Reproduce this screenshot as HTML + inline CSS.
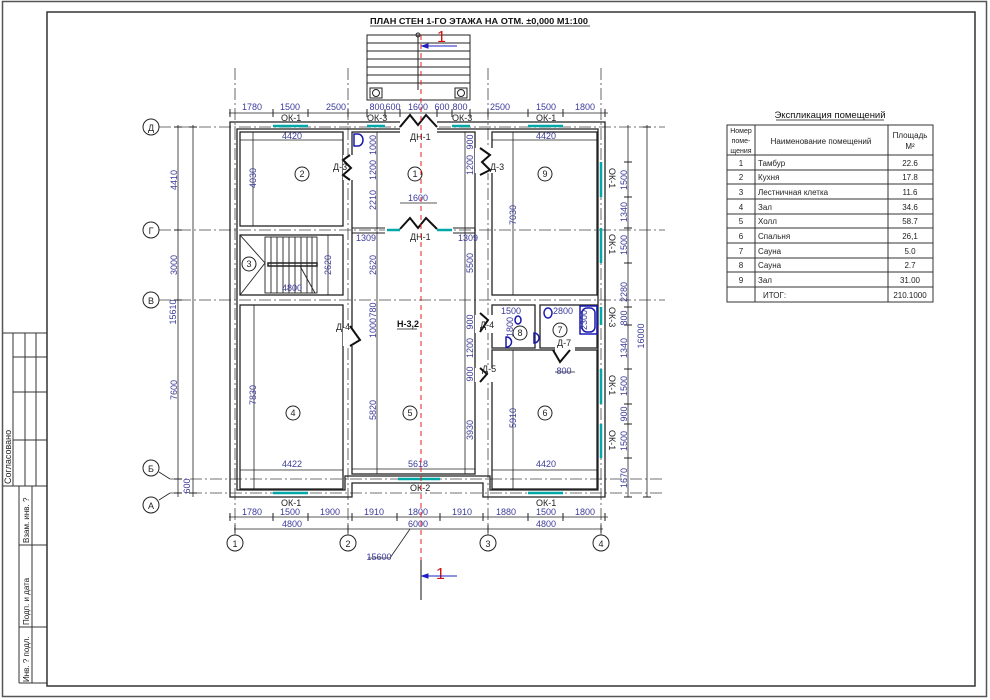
<!DOCTYPE html>
<html><head><meta charset="utf-8"><style>
html,body{margin:0;padding:0;background:#fff;}
svg{display:block;}
text{font-family:"Liberation Sans",sans-serif;}
.d{fill:#3b3b9a;font-size:9px;}
.k{fill:#222;font-size:9px;}
.t{fill:#222;font-size:8px;}
</style></head><body>
<svg width="990" height="700" viewBox="0 0 990 700" xmlns="http://www.w3.org/2000/svg">
<!-- frames -->
<rect x="2.5" y="1.5" width="984" height="695" fill="none" stroke="#555" stroke-width="1.5"/>
<rect x="47" y="12" width="928" height="674" fill="none" stroke="#333" stroke-width="1.5"/>
<!-- left stamp -->
<g stroke="#333" stroke-width="1" fill="none">
<line x1="3" y1="333" x2="47" y2="333"/>
<line x1="13" y1="333" x2="13" y2="486"/>
<line x1="25" y1="333" x2="25" y2="486"/>
<line x1="36" y1="333" x2="36" y2="486"/>
<line x1="13" y1="357" x2="47" y2="357"/>
<line x1="13" y1="392" x2="47" y2="392"/>
<line x1="13" y1="440" x2="47" y2="440"/>
<line x1="3" y1="486" x2="47" y2="486"/>
<line x1="19" y1="486" x2="19" y2="683"/>
<line x1="32" y1="486" x2="32" y2="683"/>
<line x1="19" y1="545" x2="47" y2="545"/>
<line x1="19" y1="627" x2="47" y2="627"/>
<line x1="19" y1="683" x2="47" y2="683"/>
</g>
<text class="k" transform="translate(11,484) rotate(-90)" font-size="10">Согласовано</text>
<text class="t" transform="translate(29,682) rotate(-90)">Инв. ? подл.</text>
<text class="t" transform="translate(29,625) rotate(-90)">Подп. и дата</text>
<text class="t" transform="translate(29,543) rotate(-90)">Взам. инв. ?</text>

<!-- title -->
<text x="370" y="24" font-size="8.5" font-weight="bold" fill="#111" textLength="218" lengthAdjust="spacingAndGlyphs">ПЛАН СТЕН 1-ГО ЭТАЖА НА ОТМ. ±0,000  М1:100</text>
<line x1="370" y1="26" x2="590" y2="26" stroke="#111" stroke-width="0.8"/>

<!-- axes -->
<g stroke="#444" stroke-width="0.8" stroke-dasharray="12,3,2,3" fill="none">
<line x1="159" y1="127" x2="665" y2="127"/>
<line x1="159" y1="230" x2="665" y2="230"/>
<line x1="159" y1="300" x2="665" y2="300"/>
<line x1="170" y1="479" x2="665" y2="479"/>
<line x1="170" y1="493" x2="665" y2="493"/>
<line x1="235" y1="68" x2="235" y2="535"/>
<line x1="348" y1="68" x2="348" y2="535"/>
<line x1="488" y1="68" x2="488" y2="535"/>
<line x1="601" y1="68" x2="601" y2="535"/>
</g>
<g stroke="#222" stroke-width="1" fill="#fff">
<circle cx="151" cy="127" r="8"/><circle cx="151" cy="230" r="8"/><circle cx="151" cy="300" r="8"/>
<circle cx="151" cy="468" r="8"/><circle cx="151" cy="505" r="8"/>
<circle cx="235" cy="543" r="8"/><circle cx="348" cy="543" r="8"/><circle cx="488" cy="543" r="8"/><circle cx="601" cy="543" r="8"/>
</g>
<g stroke="#222" stroke-width="0.8"><line x1="159" y1="472" x2="170" y2="479"/><line x1="159" y1="500" x2="170" y2="493"/></g>
<g class="k" font-size="10" text-anchor="middle">
<text x="151" y="131">Д</text><text x="151" y="234">Г</text><text x="151" y="304">В</text><text x="151" y="472">Б</text><text x="151" y="509">А</text>
<text x="235" y="547">1</text><text x="348" y="547">2</text><text x="488" y="547">3</text><text x="601" y="547">4</text>
</g>

<!-- porch stairs -->
<g stroke="#222" stroke-width="1" fill="none">
<rect x="367" y="35" width="103" height="65"/>
<line x1="367" y1="43" x2="470" y2="43"/><line x1="367" y1="51" x2="470" y2="51"/><line x1="367" y1="59" x2="470" y2="59"/>
<line x1="367" y1="67" x2="470" y2="67"/><line x1="367" y1="75" x2="470" y2="75"/><line x1="367" y1="83" x2="470" y2="83"/>
<rect x="370" y="88" width="12" height="10"/><rect x="455" y="88" width="12" height="10"/>
<circle cx="376" cy="93" r="3.5"/><circle cx="461" cy="93" r="3.5"/>
<line x1="418" y1="35" x2="418" y2="90"/><circle cx="418" cy="35" r="2"/>
</g>

<!-- walls -->
<g stroke="#222" stroke-width="1.3" fill="none">
<path d="M230 122 H605 V497 H483 V483 H352 V497 H230 Z"/>
<path d="M237 129 H598 V490 H490 V476 H345 V490 H237 Z"/>
<rect x="240" y="132" width="103" height="94"/>
<rect x="240" y="235" width="103" height="60"/>
<rect x="240" y="305" width="103" height="184"/>
<rect x="352" y="132" width="123" height="342"/>
<rect x="492" y="132" width="105" height="163"/>
<rect x="492" y="305" width="43" height="43"/>
<rect x="540" y="305" width="57" height="43"/>
<rect x="492" y="350" width="105" height="139"/>
</g>
<!-- partition at Г in room 1 -->
<g stroke="#222" stroke-width="1"><line x1="352" y1="228" x2="475" y2="228"/><line x1="352" y1="233" x2="475" y2="233"/></g>
<!-- white door gaps -->
<g fill="#fff">
<rect x="400" y="120" width="37" height="14"/>
<rect x="343" y="155" width="10" height="25"/>
<rect x="475" y="148" width="18" height="25"/>
<rect x="385" y="226" width="68" height="9"/>
<rect x="343" y="328" width="10" height="18"/>
<rect x="475" y="315" width="18" height="18"/>
<rect x="475" y="368" width="18" height="14"/>
<rect x="555" y="346" width="20" height="6"/>
</g>
<!-- doors -->
<g stroke="#111" stroke-width="2" fill="none">
<path d="M400 127 L410 115 L418 125 L426 115 L437 127"/>
<path d="M350 155 L343 160 L351 168 L343 175 L350 180"/>
<path d="M480 148 L490 155 L482 162 L490 170 L480 175"/>
<path d="M400 229 L410 218 L418 228 L426 218 L437 229"/>
<path d="M350 326 L360 340 L350 346"/>
<path d="M480 313 L488 320 L480 332"/>
<path d="M480 368 L487 374 L480 382"/>
<path d="M553 350 L560 362 L570 350"/>
</g>
<!-- windows cyan -->
<g stroke="#00a8a8" stroke-width="2.5">
<line x1="273" y1="126" x2="308" y2="126"/><line x1="367" y1="126" x2="385" y2="126"/>
<line x1="452" y1="126" x2="470" y2="126"/><line x1="528" y1="126" x2="563" y2="126"/>
<line x1="387" y1="230" x2="400" y2="230"/><line x1="437" y1="230" x2="452" y2="230"/>
<line x1="273" y1="493" x2="308" y2="493"/><line x1="398" y1="479" x2="440" y2="479"/>
<line x1="528" y1="493" x2="563" y2="493"/>
<line x1="601" y1="162" x2="601" y2="197"/><line x1="601" y1="228" x2="601" y2="263"/>
<line x1="601" y1="307" x2="601" y2="325"/><line x1="601" y1="369" x2="601" y2="404"/>
<line x1="601" y1="424" x2="601" y2="458"/>
</g>
<g class="k" font-size="8.5">
<text x="281" y="121">ОК-1</text><text x="367" y="121">ОК-3</text><text x="452" y="121">ОК-3</text><text x="536" y="121">ОК-1</text>
<text x="410" y="140">ДН-1</text><text x="410" y="240">ДН-1</text>
<text x="281" y="506">ОК-1</text><text x="410" y="491">ОК-2</text><text x="536" y="506">ОК-1</text>
<text x="333" y="170">Д-3</text><text x="490" y="170">Д-3</text><text x="336" y="330">Д-4</text><text x="480" y="328">Д-4</text>
<text x="482" y="372">Д-5</text><text x="557" y="346">Д-7</text>
</g>
<g class="k" font-size="8.5">
<text transform="translate(609,168) rotate(90)">ОК-1</text><text transform="translate(609,234) rotate(90)">ОК-1</text>
<text transform="translate(609,307) rotate(90)">ОК-3</text><text transform="translate(609,375) rotate(90)">ОК-1</text>
<text transform="translate(609,430) rotate(90)">ОК-1</text>
</g>
<!-- stair room 3 -->
<g stroke="#222" stroke-width="0.9" fill="none">
<path d="M240 235 L265 263 L240 295"/>
<rect x="265" y="237" width="52" height="56"/>
<line x1="271" y1="237" x2="271" y2="293"/><line x1="277" y1="237" x2="277" y2="293"/><line x1="283" y1="237" x2="283" y2="293"/>
<line x1="289" y1="237" x2="289" y2="293"/><line x1="295" y1="237" x2="295" y2="293"/><line x1="301" y1="237" x2="301" y2="293"/>
<line x1="307" y1="237" x2="307" y2="293"/><line x1="312" y1="237" x2="312" y2="293"/>
<rect x="268" y="263" width="49" height="3" stroke-width="1.5"/>
<line x1="300" y1="266" x2="315" y2="293"/>
</g>
<!-- sanitary -->
<g stroke="#1a1ab0" stroke-width="1.5" fill="none">
<path d="M354 134 H358 A5 6 0 0 1 358 146 H354 Z"/>
<rect x="582" y="308" width="13" height="24" rx="5"/>
<rect x="580" y="306" width="17" height="28"/>
<ellipse cx="548" cy="313" rx="4" ry="5"/>
<path d="M506 337 A5 5 0 1 1 507 347 H506 Z"/>
<path d="M534 333 A5 5 0 1 1 534 343 Z"/>
<ellipse cx="518" cy="320" rx="3" ry="4"/>
</g>
<!-- room numbers -->
<g stroke="#222" stroke-width="1" fill="#fff">
<circle cx="302" cy="174" r="7"/><circle cx="415" cy="174" r="7"/><circle cx="545" cy="174" r="7"/>
<circle cx="249" cy="264" r="7"/><circle cx="293" cy="413" r="7"/><circle cx="410" cy="413" r="7"/>
<circle cx="545" cy="413" r="7"/><circle cx="560" cy="330" r="7"/><circle cx="520" cy="333" r="7"/>
</g>
<g class="k" font-size="9" text-anchor="middle">
<text x="302" y="177">2</text><text x="415" y="177">1</text><text x="545" y="177">9</text><text x="249" y="267">3</text>
<text x="293" y="416">4</text><text x="410" y="416">5</text><text x="545" y="416">6</text><text x="560" y="333">7</text><text x="520" y="336">8</text>
</g>
<text x="397" y="327" font-size="9" font-weight="bold" fill="#111">Н-3,2</text>
<line x1="397" y1="329" x2="417" y2="329" stroke="#111" stroke-width="0.8"/>

<!-- dimension lines -->
<g stroke="#222" stroke-width="0.8" fill="none">
<line x1="229" y1="113" x2="608" y2="113"/>
<line x1="229" y1="517" x2="608" y2="517"/>
<line x1="234" y1="529" x2="603" y2="529"/>
<line x1="178" y1="125" x2="178" y2="497"/>
<line x1="193" y1="125" x2="193" y2="497"/>
<line x1="628" y1="125" x2="628" y2="497"/>
<line x1="647" y1="125" x2="647" y2="497"/>
<line x1="410" y1="529" x2="390" y2="558"/><line x1="368" y1="558" x2="390" y2="558"/>
<!-- inner -->
<line x1="240" y1="140" x2="343" y2="140"/><line x1="253" y1="132" x2="253" y2="226"/>
<line x1="492" y1="140" x2="597" y2="140"/><line x1="513" y1="132" x2="513" y2="295"/>
<line x1="377" y1="132" x2="377" y2="474"/><line x1="465" y1="132" x2="465" y2="474"/>
<line x1="400" y1="203" x2="437" y2="203"/>
<line x1="240" y1="470" x2="343" y2="470"/><line x1="352" y1="469" x2="475" y2="469"/><line x1="492" y1="470" x2="597" y2="470"/>
<line x1="254" y1="305" x2="254" y2="489"/><line x1="513" y1="350" x2="513" y2="489"/>
<line x1="328" y1="235" x2="328" y2="295"/>
<line x1="555" y1="372" x2="575" y2="372"/>
</g>
<g stroke="#222" stroke-width="1">
<path d="M230 109 l0 8 M273 109 l0 8 M308 109 l0 8 M348 109 l0 8 M367 109 l0 8 M385 109 l0 8 M400 109 l0 8 M437 109 l0 8 M452 109 l0 8 M470 109 l0 8 M488 109 l0 8 M528 109 l0 8 M563 109 l0 8 M605 109 l0 8"/>
<path d="M230 513 l0 8 M273 513 l0 8 M308 513 l0 8 M352 513 l0 8 M397 513 l0 8 M440 513 l0 8 M483 513 l0 8 M528 513 l0 8 M563 513 l0 8 M605 513 l0 8"/>
<path d="M235 525 l0 8 M348 525 l0 8 M488 525 l0 8 M601 525 l0 8"/>
<path d="M174 127 l8 0 M174 230 l8 0 M174 300 l8 0 M174 479 l8 0 M174 493 l8 0 M189 127 l8 0 M189 493 l8 0"/>
<path d="M624 162 l8 0 M624 197 l8 0 M624 228 l8 0 M624 263 l8 0 M624 307 l8 0 M624 325 l8 0 M624 369 l8 0 M624 404 l8 0 M624 424 l8 0 M624 458 l8 0 M624 497 l8 0 M643 127 l8 0 M643 497 l8 0"/>
</g>
<g class="d" text-anchor="middle">
<text x="252" y="110">1780</text><text x="290" y="110">1500</text><text x="336" y="110">2500</text>
<text x="377" y="110">800</text><text x="393" y="110">600</text><text x="418" y="110">1600</text>
<text x="442" y="110">600</text><text x="460" y="110">800</text><text x="500" y="110">2500</text>
<text x="546" y="110">1500</text><text x="585" y="110">1800</text>
<text x="252" y="515">1780</text><text x="290" y="515">1500</text><text x="330" y="515">1900</text>
<text x="374" y="515">1910</text><text x="418" y="515">1800</text><text x="462" y="515">1910</text>
<text x="506" y="515">1880</text><text x="546" y="515">1500</text><text x="585" y="515">1800</text>
<text x="292" y="527">4800</text><text x="418" y="527">6000</text><text x="546" y="527">4800</text>
<text x="379" y="560">15600</text>
<text x="292" y="139">4420</text><text x="546" y="139">4420</text><text x="418" y="201">1600</text>
<text x="366" y="241">1309</text><text x="468" y="241">1309</text><text x="292" y="291">4800</text>
<text x="292" y="467">4422</text><text x="418" y="467">5618</text><text x="546" y="467">4420</text>
<text x="511" y="314">1500</text><text x="563" y="314">2800</text><text x="564" y="374">800</text>
</g>
<g class="d" text-anchor="middle">
<text transform="translate(177,180) rotate(-90)">4410</text>
<text transform="translate(177,265) rotate(-90)">3000</text>
<text transform="translate(177,390) rotate(-90)">7600</text>
<text transform="translate(190,486) rotate(-90)">600</text>
<text transform="translate(176,312) rotate(-90)">15610</text>
<text transform="translate(256,178) rotate(-90)">4030</text>
<text transform="translate(256,395) rotate(-90)">7830</text>
<text transform="translate(376,145) rotate(-90)">1000</text>
<text transform="translate(376,170) rotate(-90)">1200</text>
<text transform="translate(376,200) rotate(-90)">2210</text>
<text transform="translate(376,265) rotate(-90)">2620</text>
<text transform="translate(376,310) rotate(-90)">780</text>
<text transform="translate(376,328) rotate(-90)">1000</text>
<text transform="translate(376,410) rotate(-90)">5820</text>
<text transform="translate(331,265) rotate(-90)">2620</text>
<text transform="translate(473,142) rotate(-90)">900</text>
<text transform="translate(473,165) rotate(-90)">1200</text>
<text transform="translate(473,263) rotate(-90)">5500</text>
<text transform="translate(473,322) rotate(-90)">900</text>
<text transform="translate(473,348) rotate(-90)">1200</text>
<text transform="translate(473,374) rotate(-90)">900</text>
<text transform="translate(473,430) rotate(-90)">3930</text>
<text transform="translate(516,215) rotate(-90)">7030</text>
<text transform="translate(516,418) rotate(-90)">5910</text>
<text transform="translate(513,327) rotate(-90)">1800</text>
<text transform="translate(587,320) rotate(-90)">2300</text>
<text transform="translate(627,180) rotate(-90)">1500</text>
<text transform="translate(627,212) rotate(-90)">1340</text>
<text transform="translate(627,245) rotate(-90)">1500</text>
<text transform="translate(627,292) rotate(-90)">2280</text>
<text transform="translate(627,318) rotate(-90)">800</text>
<text transform="translate(627,348) rotate(-90)">1340</text>
<text transform="translate(627,386) rotate(-90)">1500</text>
<text transform="translate(627,414) rotate(-90)">900</text>
<text transform="translate(627,441) rotate(-90)">1500</text>
<text transform="translate(627,478) rotate(-90)">1670</text>
<text transform="translate(644,336) rotate(-90)">16000</text>
</g>

<!-- section line -->
<line x1="421" y1="35" x2="421" y2="600" stroke="#e02020" stroke-width="1" stroke-dasharray="5,4"/>
<line x1="421" y1="560" x2="421" y2="600" stroke="#111" stroke-width="1"/>
<text x="437" y="42" fill="#d01010" font-size="16">1</text>
<text x="436" y="579" fill="#d01010" font-size="16">1</text>
<g stroke="#2020c0" stroke-width="1" fill="#2020c0">
<line x1="424" y1="46" x2="457" y2="46"/><path d="M422 46 l6 -2 v4 z"/>
<line x1="424" y1="576" x2="457" y2="576"/><path d="M422 576 l6 -2 v4 z"/>
</g>

<!-- explication table -->
<text x="830" y="118" text-anchor="middle" font-size="9.5" fill="#111">Экспликация помещений</text>
<line x1="776" y1="120" x2="884" y2="120" stroke="#111" stroke-width="0.8"/>
<g stroke="#333" stroke-width="1" fill="none">
<rect x="727" y="125" width="206" height="177"/>
<line x1="755" y1="125" x2="755" y2="302"/><line x1="888" y1="125" x2="888" y2="302"/>
<line x1="727" y1="155" x2="933" y2="155"/><line x1="727" y1="170" x2="933" y2="170"/>
<line x1="727" y1="184" x2="933" y2="184"/><line x1="727" y1="199" x2="933" y2="199"/>
<line x1="727" y1="214" x2="933" y2="214"/><line x1="727" y1="228" x2="933" y2="228"/>
<line x1="727" y1="243" x2="933" y2="243"/><line x1="727" y1="258" x2="933" y2="258"/>
<line x1="727" y1="272" x2="933" y2="272"/><line x1="727" y1="287" x2="933" y2="287"/>
</g>
<g font-size="7" fill="#222" text-anchor="middle">
<text x="741" y="133">Номер</text><text x="741" y="143">поме-</text><text x="741" y="153">щения</text>
<text x="821" y="144" font-size="8">Наименование помещений</text>
<text x="910" y="138" font-size="8">Площадь</text><text x="910" y="149" font-size="8">М²</text>
</g>
<g font-size="8" fill="#222">
<g text-anchor="middle">
<text x="741" y="166">1</text><text x="741" y="180">2</text><text x="741" y="195">3</text><text x="741" y="210">4</text><text x="741" y="224">5</text>
<text x="741" y="239">6</text><text x="741" y="254">7</text><text x="741" y="268">8</text><text x="741" y="283">9</text>
<text x="910" y="166">22.6</text><text x="910" y="180">17.8</text><text x="910" y="195">11.6</text><text x="910" y="210">34.6</text><text x="910" y="224">58.7</text>
<text x="910" y="239">26,1</text><text x="910" y="254">5.0</text><text x="910" y="268">2.7</text><text x="910" y="283">31.00</text><text x="910" y="298">210.1000</text>
</g>
<text x="758" y="166">Тамбур</text><text x="758" y="180">Кухня</text><text x="758" y="195">Лестничная клетка</text><text x="758" y="210">Зал</text>
<text x="758" y="224">Холл</text><text x="758" y="239">Спальня</text><text x="758" y="254">Сауна</text><text x="758" y="268">Сауна</text>
<text x="758" y="283">Зал</text><text x="763" y="298">ИТОГ:</text>
</g>
</svg>
</body></html>
